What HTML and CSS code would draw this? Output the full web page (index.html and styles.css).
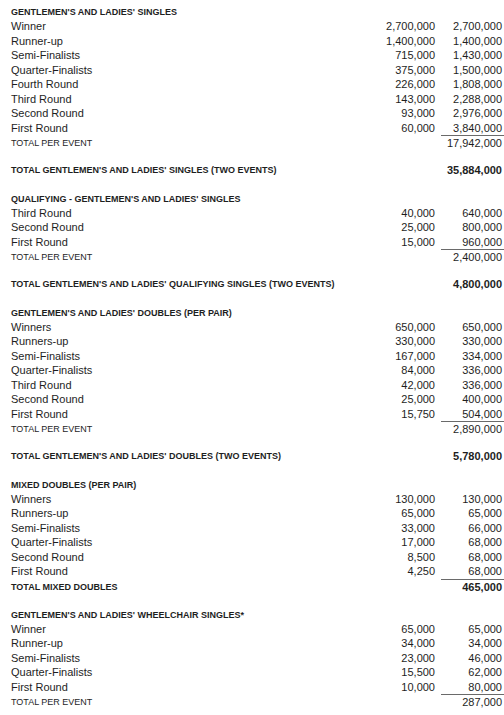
FILE: index.html
```html
<!DOCTYPE html>
<html lang="en">
<head>
<meta charset="utf-8">
<title>Prize Money</title>
<link rel="stylesheet" href="styles.css">
</head>
<body>
<div class="sheet">

  <section class="event">
    <div class="row head"><span class="label">GENTLEMEN'S AND LADIES' SINGLES</span></div>
    <div class="row"><span class="label">Winner</span><span class="num">2,700,000</span><span class="num tot">2,700,000</span></div>
    <div class="row"><span class="label">Runner-up</span><span class="num">1,400,000</span><span class="num tot">1,400,000</span></div>
    <div class="row"><span class="label">Semi-Finalists</span><span class="num">715,000</span><span class="num tot">1,430,000</span></div>
    <div class="row"><span class="label">Quarter-Finalists</span><span class="num">375,000</span><span class="num tot">1,500,000</span></div>
    <div class="row"><span class="label">Fourth Round</span><span class="num">226,000</span><span class="num tot">1,808,000</span></div>
    <div class="row"><span class="label">Third Round</span><span class="num">143,000</span><span class="num tot">2,288,000</span></div>
    <div class="row"><span class="label">Second Round</span><span class="num">93,000</span><span class="num tot">2,976,000</span></div>
    <div class="row last"><span class="label">First Round</span><span class="num">60,000</span><span class="num tot">3,840,000</span></div>
    <div class="row sub"><span class="label">TOTAL PER EVENT</span><span class="num"></span><span class="num tot">17,942,000</span></div>
  </section>
  <div class="row grand"><span class="label">TOTAL GENTLEMEN'S AND LADIES' SINGLES (TWO EVENTS)</span><span class="num"></span><span class="num tot">35,884,000</span></div>

  <section class="event">
    <div class="row head"><span class="label">QUALIFYING - GENTLEMEN'S AND LADIES' SINGLES</span></div>
    <div class="row"><span class="label">Third Round</span><span class="num">40,000</span><span class="num tot">640,000</span></div>
    <div class="row"><span class="label">Second Round</span><span class="num">25,000</span><span class="num tot">800,000</span></div>
    <div class="row last"><span class="label">First Round</span><span class="num">15,000</span><span class="num tot">960,000</span></div>
    <div class="row sub"><span class="label">TOTAL PER EVENT</span><span class="num"></span><span class="num tot">2,400,000</span></div>
  </section>
  <div class="row grand"><span class="label">TOTAL GENTLEMEN'S AND LADIES' QUALIFYING SINGLES (TWO EVENTS)</span><span class="num"></span><span class="num tot">4,800,000</span></div>

  <section class="event">
    <div class="row head"><span class="label">GENTLEMEN'S AND LADIES' DOUBLES (PER PAIR)</span></div>
    <div class="row"><span class="label">Winners</span><span class="num">650,000</span><span class="num tot">650,000</span></div>
    <div class="row"><span class="label">Runners-up</span><span class="num">330,000</span><span class="num tot">330,000</span></div>
    <div class="row"><span class="label">Semi-Finalists</span><span class="num">167,000</span><span class="num tot">334,000</span></div>
    <div class="row"><span class="label">Quarter-Finalists</span><span class="num">84,000</span><span class="num tot">336,000</span></div>
    <div class="row"><span class="label">Third Round</span><span class="num">42,000</span><span class="num tot">336,000</span></div>
    <div class="row"><span class="label">Second Round</span><span class="num">25,000</span><span class="num tot">400,000</span></div>
    <div class="row last"><span class="label">First Round</span><span class="num">15,750</span><span class="num tot">504,000</span></div>
    <div class="row sub"><span class="label">TOTAL PER EVENT</span><span class="num"></span><span class="num tot">2,890,000</span></div>
  </section>
  <div class="row grand"><span class="label">TOTAL GENTLEMEN'S AND LADIES' DOUBLES (TWO EVENTS)</span><span class="num"></span><span class="num tot">5,780,000</span></div>

  <section class="event">
    <div class="row head"><span class="label">MIXED DOUBLES (PER PAIR)</span></div>
    <div class="row"><span class="label">Winners</span><span class="num">130,000</span><span class="num tot">130,000</span></div>
    <div class="row"><span class="label">Runners-up</span><span class="num">65,000</span><span class="num tot">65,000</span></div>
    <div class="row"><span class="label">Semi-Finalists</span><span class="num">33,000</span><span class="num tot">66,000</span></div>
    <div class="row"><span class="label">Quarter-Finalists</span><span class="num">17,000</span><span class="num tot">68,000</span></div>
    <div class="row"><span class="label">Second Round</span><span class="num">8,500</span><span class="num tot">68,000</span></div>
    <div class="row last"><span class="label">First Round</span><span class="num">4,250</span><span class="num tot">68,000</span></div>
    <div class="row sub strong"><span class="label">TOTAL MIXED DOUBLES</span><span class="num"></span><span class="num tot">465,000</span></div>
  </section>

  <section class="event">
    <div class="row head"><span class="label">GENTLEMEN'S AND LADIES' WHEELCHAIR SINGLES*</span></div>
    <div class="row"><span class="label">Winner</span><span class="num">65,000</span><span class="num tot">65,000</span></div>
    <div class="row"><span class="label">Runner-up</span><span class="num">34,000</span><span class="num tot">34,000</span></div>
    <div class="row"><span class="label">Semi-Finalists</span><span class="num">23,000</span><span class="num tot">46,000</span></div>
    <div class="row"><span class="label">Quarter-Finalists</span><span class="num">15,500</span><span class="num tot">62,000</span></div>
    <div class="row last"><span class="label">First Round</span><span class="num">10,000</span><span class="num tot">80,000</span></div>
    <div class="row sub"><span class="label">TOTAL PER EVENT</span><span class="num"></span><span class="num tot">287,000</span></div>
  </section>

</div>
</body>
</html>
```
FILE: styles.css
```css
html, body {
  margin: 0;
  padding: 0;
  background: #ffffff;
}

body {
  font-family: "Liberation Sans", Arial, sans-serif;
  color: #1e1e1e;
  width: 504px;
}

.sheet {
  display: flex;
  flex-direction: column;
  padding: 6px 0 0 11px;
}

.event {
  display: flex;
  flex-direction: column;
}

.row {
  display: grid;
  grid-template-columns: 1fr 60px 63px;
  column-gap: 6px;
  height: 14.5px;
  line-height: 14.5px;
  font-size: 11px;
  white-space: nowrap;
}

.num {
  text-align: right;
}

.num.tot {
  padding-right: 2px;
}

.row.head {
  height: 13px;
  line-height: 13px;
  font-size: 9px;
  font-weight: bold;
}

.row.last .tot {
  border-bottom: 1px solid #6a6a6a;
}

.row.sub {
  height: 15px;
  line-height: 15px;
  margin-top: 1px;
}

.row.sub .label {
  font-size: 9px;
}

.row.sub.strong {
  font-weight: bold;
  margin-bottom: 14px;
}

.row.grand {
  margin-top: 12px;
  margin-bottom: 15px;
  font-weight: bold;
}

.row.grand .label {
  font-size: 9px;
}
```
